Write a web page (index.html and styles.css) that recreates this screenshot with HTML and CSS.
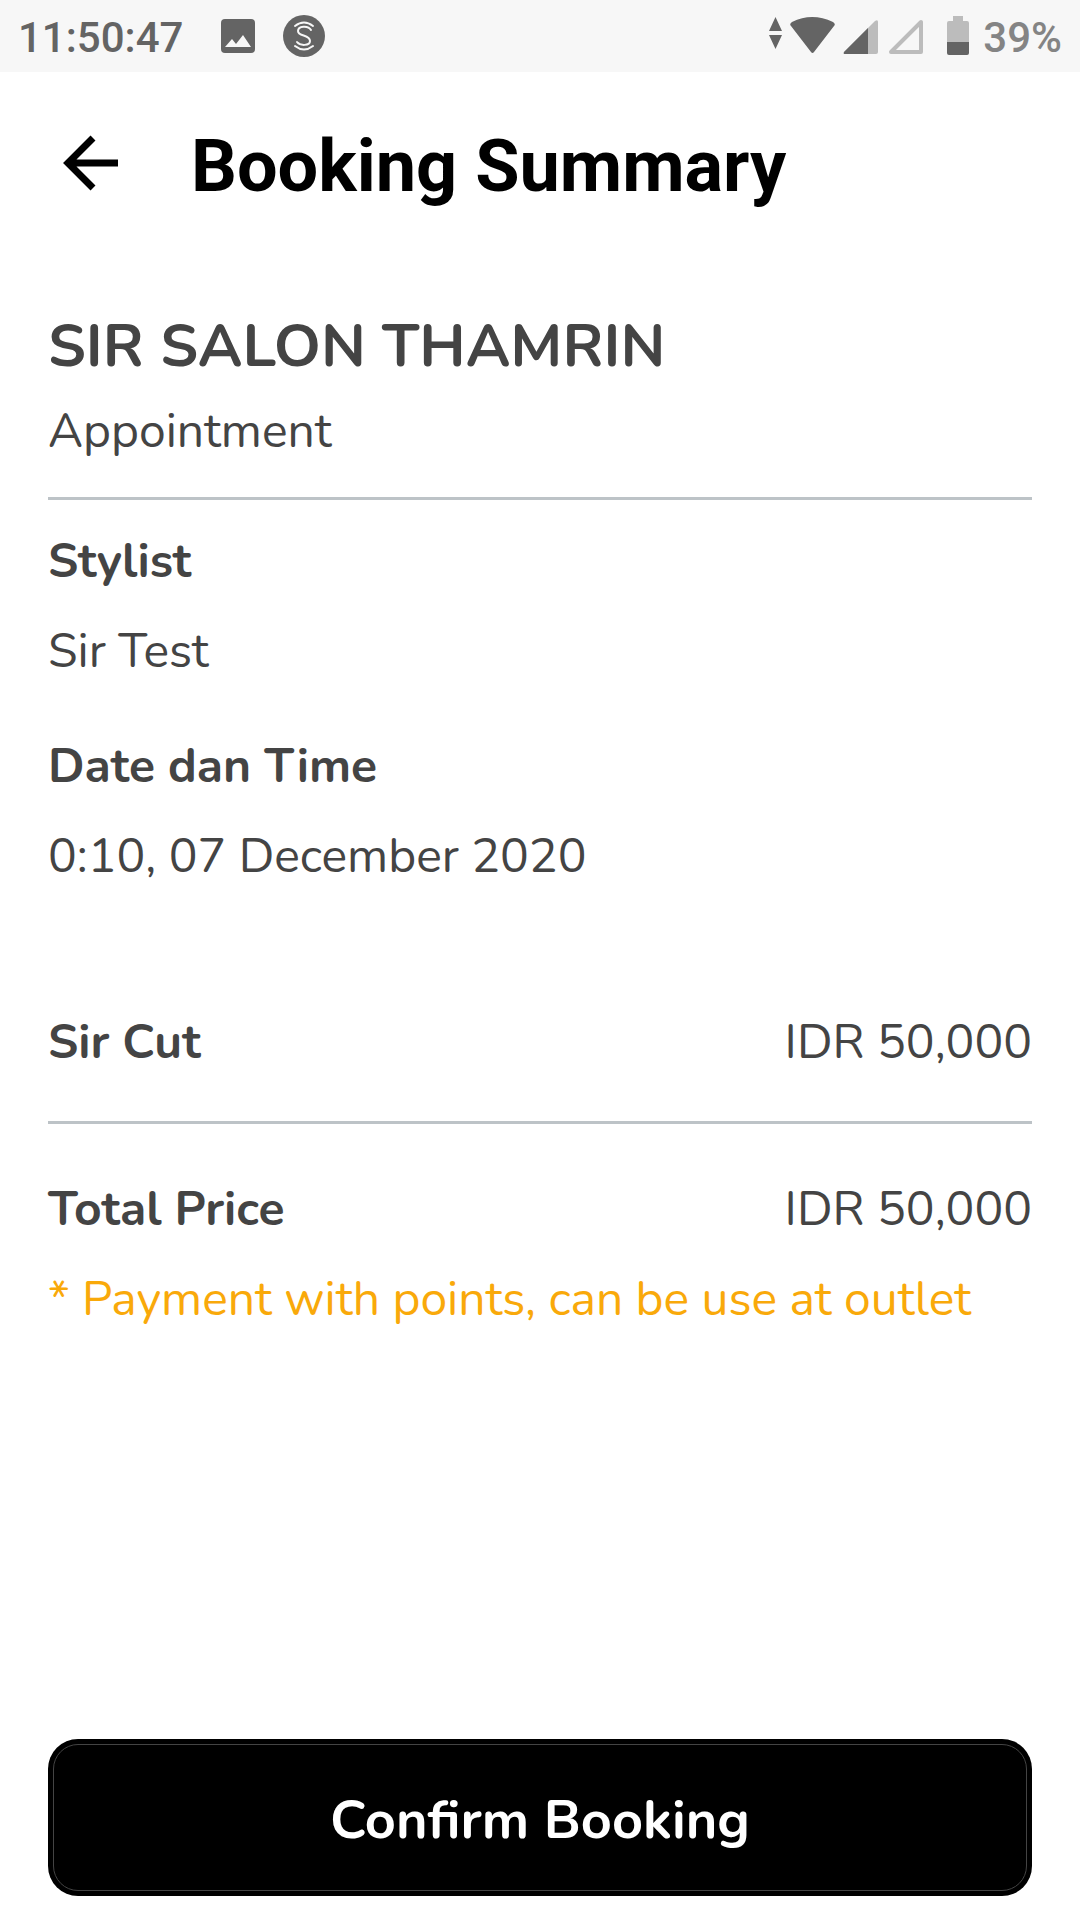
FILE: index.html
```html
<!DOCTYPE html>
<html lang="en">

<head>
    <meta charset="UTF-8">
    <meta name="viewport" content="width=device-width, initial-scale=1.0">
    <title>Booking Summary</title>
    <link rel="stylesheet" href="styles.css">
</head>

<body>
    <div class="status-bar">
        <span class="clock">11:50:47</span>
        <svg class="icon-image" width="34" height="34" viewBox="0 0 34 34">
            <rect width="34" height="34" rx="4" fill="#646464" />
            <path d="M4 28 L11 20 L15 25 L22 16 L30 28 Z" fill="#f7f7f7" />
        </svg>
        <svg class="icon-coin" width="42" height="42" viewBox="0 0 42 42">
            <circle cx="21" cy="21" r="21" fill="#646464" />
            <g fill="none" stroke="#f7f7f7" stroke-width="2" stroke-linecap="round">
                <path d="M12 11 Q21 4 30 11" />
                <path d="M28 15 C25 10 15 11 15 16 C15 22 27 19 27 26 C27 31 17 31 14 27" />
                <path d="M12 31 Q21 38 30 31" />
            </g>
        </svg>
        <div class="status-right">
            <svg width="154" height="40" viewBox="0 0 154 40">
                <path d="M0 15 L6.500 1 L13 15 Z M0 19 H13 L6.500 33 Z" fill="#646464" />
                <path d="M22 10 Q20 8 23 6 Q43 -4 64 6 Q67 8 65 10 L45 36 Q43.500 38 42 36 Z" fill="#646464" />
                <path d="M76 38 Q74 38 75 36 L106 5 Q109 3 109 6 V36 Q109 38 107 38 Z" fill="#bcbcbc" />
                <path d="M76 38 Q74 38 75 36 L99 12 V38 Z" fill="#646464" />
                <path d="M122 36 L152 6 V36 Z" fill="none" stroke="#bcbcbc" stroke-width="4" stroke-linejoin="round" />
            </svg>
            <svg class="icon-battery" width="22" height="40" viewBox="0 0 22 40">
                <path d="M6 0 H16 V5 H20 Q22 5 22 7 V26 H0 V7 Q0 5 2 5 H6 Z" fill="#bcbcbc" />
                <path d="M0 26 H22 V37 Q22 39 20 39 H2 Q0 39 0 37 Z" fill="#646464" />
            </svg>
            <span class="percent">39%</span>
        </div>
    </div>

    <header class="header">
        <button class="back" type="button" aria-label="Back">
            <svg width="56" height="56" viewBox="0 0 56 56">
                <path d="M55 28 H5 M30 3 L5 28 L30 53" fill="none" stroke="#000" stroke-width="7" />
            </svg>
        </button>
        <h1>Booking Summary</h1>
    </header>

    <main class="content">
        <h2>SIR SALON THAMRIN</h2>
        <p class="type">Appointment</p>
        <hr>
        <dl class="details">
            <dt>Stylist</dt>
            <dd>Sir Test</dd>
            <dt>Date dan Time</dt>
            <dd>0:10, 07 December 2020</dd>
        </dl>
        <div class="row">
            <strong>Sir Cut</strong>
            <span>IDR 50,000</span>
        </div>
        <hr>
        <div class="row total">
            <strong>Total Price</strong>
            <span>IDR 50,000</span>
        </div>
        <p class="note">* Payment with points, can be use at outlet</p>
    </main>

    <footer class="footer">
        <button class="confirm" type="button"><span>Confirm Booking</span></button>
    </footer>
</body>

</html>
```

FILE: styles.css
```css
* {
    box-sizing: border-box;
    margin: 0;
    padding: 0;
}

body {
    display: flex;
    flex-direction: column;
    min-height: 100vh;
    background: #fff;
    color: #444;
    font-family: Nunito, Lato, sans-serif;
    font-size: 48px;
    line-height: 60px;
}

svg {
    display: block;
}

.status-bar {
    display: flex;
    align-items: center;
    height: 72px;
    padding: 0 18px;
    background: #f7f7f7;
    color: #646464;
    font-family: Roboto, sans-serif;
    font-size: 42px;
    font-weight: 500;
}

.clock,
.percent {
    padding-top: 3px;
}

.icon-image {
    margin-left: 38px;
}

.icon-coin {
    margin-left: 28px;
}

.status-right {
    display: flex;
    align-items: center;
    margin-left: auto;
}

.icon-battery {
    margin-left: 24px;
}

.percent {
    margin-left: 14px;
    color: #848484;
}

.header {
    display: flex;
    align-items: center;
    gap: 72px;
    height: 186px;
    padding: 0 63px 4px;
}

.header h1 {
    padding-top: 8px;
    color: #000;
    font-family: Roboto, sans-serif;
    font-size: 72px;
    line-height: 84px;
}

.back {
    border: none;
    background: none;
}

.content {
    flex: 1;
    padding: 50px 48px 0;
}

.content h2 {
    font-size: 60px;
    line-height: 76px;
}

.type {
    margin: 17px 0 36px;
}

hr {
    height: 3px;
    border: none;
    background: #bdc3c7;
}

.details {
    margin: 31px 0 126px;
}

.details dt {
    font-weight: 700;
}

.details dd {
    margin-top: 30px;
}

.details dd + dt {
    margin-top: 55px;
}

.row {
    display: flex;
    justify-content: space-between;
    margin-bottom: 49px;
}

.total {
    margin: 55px 0 30px;
}

.note {
    color: #f9a90a;
}

.footer {
    padding: 0 48px 24px;
}

.confirm {
    width: 100%;
    padding: 5px;
    border: none;
    border-radius: 30px;
    background: #000;
    color: #fff;
    font-family: inherit;
    font-size: 54px;
    font-weight: 700;
    line-height: 139px;
}

.confirm span {
    display: block;
    padding-top: 6px;
    border: 1px solid #444;
    border-radius: 25px;
}
```
